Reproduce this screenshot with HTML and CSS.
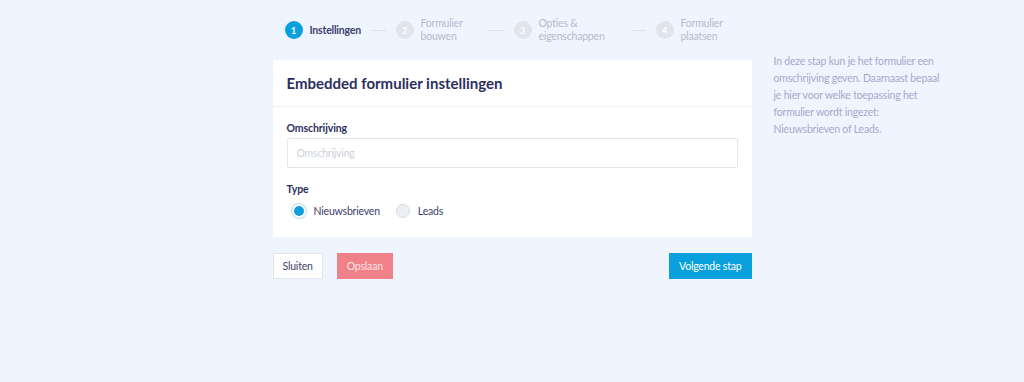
FILE: index.html
```html
<!DOCTYPE html>
<html lang="nl">
<head>
    <meta charset="UTF-8">
    <meta name="viewport" content="width=device-width, initial-scale=1.0">
    <title>Embedded formulier instellingen</title>
    <link rel="stylesheet" href="styles.css">
</head>
<body>
    <div class="page">
        <div class="main">
            <ol class="steps">
                <li class="step active"><span class="num">1</span><span class="label">Instellingen</span></li>
                <li class="sep"></li>
                <li class="step"><span class="num">2</span><span class="label">Formulier<br>bouwen</span></li>
                <li class="sep"></li>
                <li class="step"><span class="num">3</span><span class="label">Opties &amp;<br>eigenschappen</span></li>
                <li class="sep"></li>
                <li class="step"><span class="num">4</span><span class="label">Formulier<br>plaatsen</span></li>
            </ol>

            <div class="card">
                <div class="card-header">
                    <h1>Embedded formulier instellingen</h1>
                </div>
                <div class="card-body">
                    <label class="field-label" for="omschrijving">Omschrijving</label>
                    <input class="input" id="omschrijving" type="text" placeholder="Omschrijving">

                    <div class="field-label type-label">Type</div>
                    <div class="radios">
                        <label class="radio checked"><span class="dot"></span>Nieuwsbrieven</label>
                        <label class="radio"><span class="dot"></span>Leads</label>
                    </div>
                </div>
            </div>

            <div class="actions">
                <button class="btn btn-light">Sluiten</button>
                <button class="btn btn-danger">Opslaan</button>
                <button class="btn btn-primary next">Volgende stap</button>
            </div>
        </div>

        <aside class="help">
            In deze stap kun je het formulier een omschrijving geven. Daarnaast bepaal je hier voor welke toepassing het formulier wordt ingezet: Nieuwsbrieven of Leads.
        </aside>
    </div>
</body>
</html>
```

FILE: styles.css
```css
body {
    margin: 0;
    background: #eef5fe;
    font-family: Lato, "Open Sans", sans-serif;
    color: #2b2f5e;
    min-height: 100vh;
}
.page {
    display: grid;
    grid-template-columns: 1fr 479px 1fr;
}
.main {
    grid-column: 2;
}
.help {
    grid-column: 3;
    padding: 53px 0 0 22px;
    max-width: 172px;
    font-size: 10.5px;
    letter-spacing: -0.2px;
    line-height: 17px;
    color: #a9a7cd;
}

/* steps */
.steps {
    list-style: none;
    margin: 0;
    padding: 16px 0 0 12px;
    height: 44px;
    box-sizing: border-box;
    display: flex;
    align-items: center;
    font-size: 10.5px;
    letter-spacing: -0.2px;
    line-height: 13px;
}
.step {
    display: flex;
    align-items: center;
    color: #b9b9cd;
}
.step .num {
    width: 18px;
    height: 18px;
    border-radius: 50%;
    background: #e1e4ea;
    color: #fff;
    font-size: 9px;
    font-weight: 700;
    letter-spacing: 0;
    display: flex;
    align-items: center;
    justify-content: center;
    margin-right: 7px;
}
.step.active { color: #3b3f6b; font-weight: 700; }
.step.active .num { background: #0aa0de; }
.step:nth-child(1) .label { width: 51px; }
.step:nth-child(3) .label { width: 58px; }
.step:nth-child(5) .label { width: 82px; }
.sep {
    width: 15px;
    height: 1px;
    background: #dde2ea;
    margin: 0 10px;
}

/* card */
.card {
    background: #fff;
    margin-top: 16px;
}
.card-header {
    height: 46px;
    padding: 0 14px;
    display: flex;
    align-items: center;
    border-bottom: 1px solid #eef1f5;
}
.card-header h1 {
    margin: 0;
    font-size: 15px;
    font-weight: 700;
    color: #2b2f5e;
}
.card-body {
    padding: 14px 14px 19px;
}
.field-label {
    display: block;
    font-size: 10.5px;
    letter-spacing: -0.1px;
    font-weight: 700;
    line-height: 14px;
    color: #2b2f5e;
}
.input {
    display: block;
    box-sizing: border-box;
    width: 100%;
    height: 30px;
    margin-top: 3px;
    padding: 0 9px;
    border: 1px solid #e3e6ec;
    border-radius: 2px;
    font-family: inherit;
    font-size: 10.5px;
    letter-spacing: -0.2px;
    color: #2b2f5e;
}
.input::placeholder { color: #cdd1db; }
.type-label { margin-top: 14px; }
.radios {
    display: flex;
    gap: 16px;
    margin-top: 8px;
    padding-left: 5px;
}
.radio {
    display: flex;
    align-items: center;
    font-size: 10.5px;
    letter-spacing: -0.2px;
    color: #3b3f6b;
}
.radio .dot {
    width: 14px;
    height: 14px;
    border-radius: 50%;
    border: 1px solid #d6dbe3;
    background: #eceff3;
    margin-right: 8px;
    box-sizing: border-box;
}
.radio.checked .dot {
    background: #0aa0de;
    border: 2px solid #fff;
    box-shadow: 0 0 0 1px #b7dcef;
}

/* buttons */
.actions {
    display: flex;
    gap: 14px;
    margin-top: 16px;
}
.btn {
    height: 26px;
    padding: 0 9px;
    border: 1px solid transparent;
    font-family: inherit;
    font-size: 10.5px;
    letter-spacing: -0.2px;
    cursor: pointer;
}
.btn-light { background: #fff; border-color: #e3e6ec; color: #3b3f6b; }
.btn-danger { background: #f08189; color: #fde3e6; }
.btn-primary { background: #0aa0de; color: #fff; }
.next { margin-left: auto; }
```
